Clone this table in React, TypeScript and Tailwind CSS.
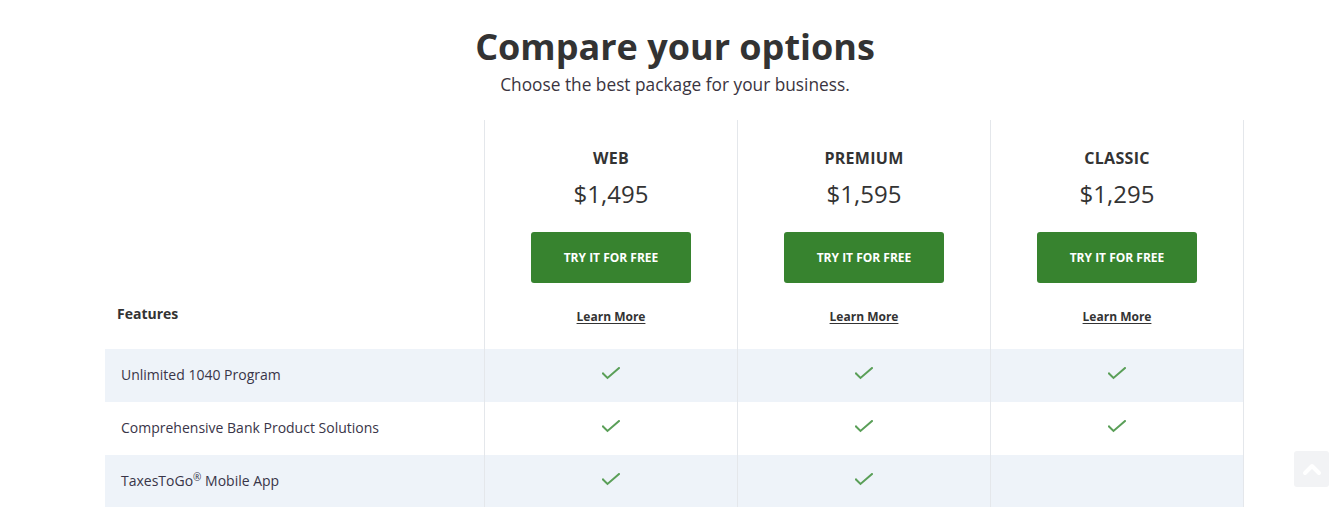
import { Fragment } from "react";

type Plan = {
  name: string;
  price: string;
};

const PLANS: Plan[] = [
  { name: "WEB", price: "$1,495" },
  { name: "PREMIUM", price: "$1,595" },
  { name: "CLASSIC", price: "$1,295" },
];

const FEATURES: Array<{ label: React.ReactNode; included: boolean[] }> = [
  { label: "Unlimited 1040 Program", included: [true, true, true] },
  {
    label: "Comprehensive Bank Product Solutions",
    included: [true, true, true],
  },
  {
    label: (
      <>
        TaxesToGo<sup className="text-[10px]">®</sup> Mobile App
      </>
    ),
    included: [true, true, false],
  },
];

function CheckIcon() {
  return (
    <svg width="18" height="13" viewBox="0 0 18 13" fill="none">
      <polyline
        points="1,6.5 5.5,11 17,1"
        stroke="#5a9f58"
        strokeWidth="2"
        strokeLinecap="square"
      />
    </svg>
  );
}

export default function App() {
  return (
    <div
      className="relative min-h-[507px] bg-white text-[#333]"
      style={{ fontFamily: '"Open Sans", "Noto Sans", sans-serif' }}
    >
      <div className="pl-[6px] pt-[25px] text-center">
        <h1 className="text-[36px] font-bold leading-[43px] text-[#333]">
          Compare your options
        </h1>
        <p className="mt-[5px] text-[17.3px] leading-6 text-[#3a3440]">
          Choose the best package for your business.
        </p>
      </div>

      <div className="ml-[105px] mt-[23px] w-[1139px]">
        <div className="grid grid-cols-[379px_253px_253px_254px]">
          <div className="flex items-end pb-[25px] pl-3">
            <span className="text-[14px] font-bold leading-5 text-[#333]">
              Features
            </span>
          </div>
          {PLANS.map((plan, i) => (
            <div
              key={plan.name}
              className={`flex flex-col items-center border-l border-[#e4e7eb] pb-[24px] pt-[26px] ${
                i === PLANS.length - 1 ? "border-r" : ""
              }`}
            >
              <div className="text-[16px] font-bold leading-6 tracking-[0.3px] text-[#333]">
                {plan.name}
              </div>
              <div className="mt-[8px] text-[24px] leading-8 text-[#333]">
                {plan.price}
              </div>
              <button
                type="button"
                className="mt-[22px] h-[51px] w-[160px] rounded-[3px] bg-[#37832f] text-[12px] font-bold text-white"
              >
                TRY IT FOR FREE
              </button>
              <a
                href="#"
                className="mt-[26px] text-[12px] font-bold leading-4 text-[#333] underline underline-offset-2"
              >
                Learn More
              </a>
            </div>
          ))}

          {FEATURES.map((row, r) => (
            <Fragment key={r}>
              <div
                className={`flex h-[53px] items-center pb-[2px] pl-4 text-[14px] text-[#393548] ${
                  r % 2 === 0 ? "bg-[#eef3f9]" : "bg-white"
                }`}
              >
                <span>{row.label}</span>
              </div>
              {row.included.map((ok, c) => (
                <div
                  key={c}
                  className={`flex h-[53px] items-center justify-center border-l border-[#e4e7eb] pb-[4px] ${
                    c === row.included.length - 1 ? "border-r" : ""
                  } ${r % 2 === 0 ? "bg-[#eef3f9]" : "bg-white"}`}
                >
                  {ok ? <CheckIcon /> : null}
                </div>
              ))}
            </Fragment>
          ))}
        </div>
      </div>

      <button
        type="button"
        className="fixed bottom-5 right-[15px] flex h-9 w-[35px] items-center justify-center rounded-[3px] bg-[#f2f3f5]"
      >
        <svg width="20" height="14" viewBox="0 0 20 14" fill="none">
          <polyline
            points="3,11 10,4 17,11"
            stroke="#ffffff"
            strokeWidth="4"
            strokeLinecap="round"
            strokeLinejoin="round"
          />
        </svg>
      </button>
    </div>
  );
}
